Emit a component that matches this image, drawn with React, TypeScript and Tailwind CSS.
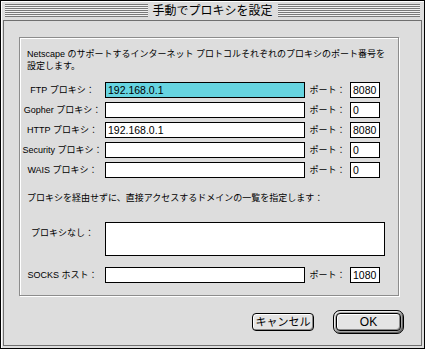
import React from 'react';

const stripes =
  'h-[13px] flex-1 bg-[repeating-linear-gradient(to_bottom,#7a7a7a_0px,#7a7a7a_1px,#f2f2f2_1px,#f2f2f2_2px)]';

function Field({ value, className, highlight }: { value?: string; className: string; highlight?: boolean }) {
  return (
    <div
      className={`${className} border border-black flex items-center pl-[2px] text-[10.5px] leading-none ${
        highlight ? 'bg-[#66d4e0]' : 'bg-white'
      }`}
    >
      {value}
    </div>
  );
}

function ProxyRow({ label, host, port, highlight }: { label: string; host?: string; port: string; highlight?: boolean }) {
  return (
    <div className="flex items-center h-[16px]">
      <span className="w-[85px] text-center whitespace-nowrap">{label}</span>
      <Field value={host} className="w-[200px] h-[16px]" highlight={highlight} />
      <span className="w-[45px] text-center whitespace-nowrap">ポート：</span>
      <Field value={port} className="w-[30px] h-[16px]" />
    </div>
  );
}

export default function App() {
  return (
    <div className="w-[425px] h-[349px] bg-[#dddddd] border border-black shadow-[inset_1px_1px_0_#fff] flex flex-col text-black text-[9px] leading-[12px] [font-family:'Liberation_Sans','Noto_Sans_CJK_JP',sans-serif]">
      {/* Title bar */}
      <div className="h-[19px] flex items-center px-[4px]">
        <div className={stripes} />
        <span className="px-[5px] text-[12px] leading-none whitespace-nowrap">手動でプロキシを設定</span>
        <div className={stripes} />
      </div>

      {/* Content */}
      <div className="flex-1 mx-[2px] mb-[2px] border border-[#6f6f6f] flex flex-col">
        <div className="ml-[15px] mt-[16px] w-[380px] h-[259px] border border-[#8c8c8c] shadow-[1px_1px_0_#fff,inset_1px_1px_0_#fff] flex flex-col">
          <p className="pl-[7px] pt-[10px] whitespace-nowrap">
            Netscape のサポートするインターネット プロトコルそれぞれのプロキシのポート番号を
            <br />
            設定します。
          </p>

          <div className="mt-[10px] flex flex-col gap-[4px]">
            <ProxyRow label="FTP プロキシ：" host="192.168.0.1" port="8080" highlight />
            <ProxyRow label="Gopher プロキシ：" port="0" />
            <ProxyRow label="HTTP プロキシ：" host="192.168.0.1" port="8080" />
            <ProxyRow label="Security プロキシ：" port="0" />
            <ProxyRow label="WAIS プロキシ：" port="0" />
          </div>

          <p className="pl-[7px] mt-[14px] whitespace-nowrap">
            プロキシを経由せずに、直接アクセスするドメインの一覧を指定します：
          </p>

          <div className="mt-[18px] flex items-start">
            <span className="w-[85px] text-center mt-[5px] whitespace-nowrap">プロキシなし：</span>
            <div className="w-[280px] h-[34px] border border-black bg-white" />
          </div>

          <div className="mt-[11px]">
            <ProxyRow label="SOCKS ホスト：" port="1080" />
          </div>
        </div>

        {/* Buttons */}
        <div className="mt-[14px] pr-[17px] flex items-center justify-end gap-[19px]">
          <button className="w-[62px] h-[18px] rounded-[4px] border border-black bg-[#e4e4e4] shadow-[inset_1px_1px_0_#fff,inset_-1px_-1px_0_#8a8a8a] text-[11px] leading-none flex items-center justify-center whitespace-nowrap">
            キャンセル
          </button>
          <div className="w-[71px] h-[24px] rounded-[7px] border border-black bg-[#a9a9a9] shadow-[inset_1px_1px_0_#eee,inset_-1px_-1px_0_#666] p-[2px]">
            <button className="w-full h-full rounded-[4px] border border-black bg-[#e4e4e4] shadow-[inset_1px_1px_0_#fff,inset_-1px_-1px_0_#8a8a8a] text-[12px] leading-none flex items-center justify-center">
              OK
            </button>
          </div>
        </div>
      </div>
    </div>
  );
}
